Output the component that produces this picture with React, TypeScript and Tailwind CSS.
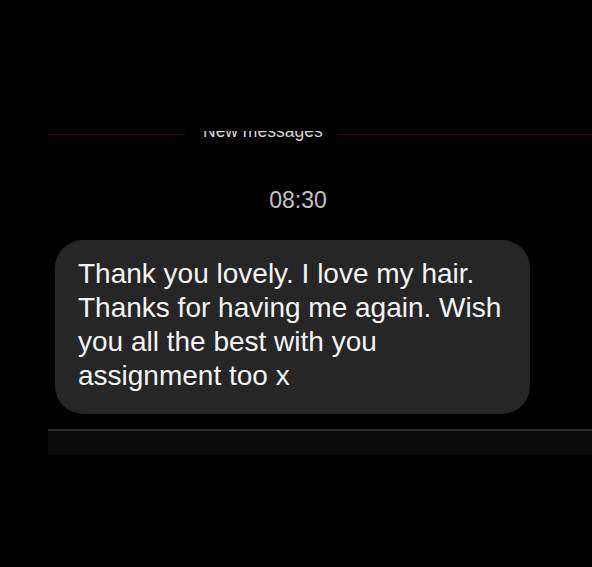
import React from 'react'

const lines = [
  'Thank you lovely. I love my hair.',
  'Thanks for having me again. Wish',
  'you all the best with you',
  'assignment too x',
]

const App = () => {
  return (
    <div className="w-[592px] h-[567px] bg-black overflow-hidden font-['Liberation_Sans',Arial,sans-serif]">
      {/* new messages divider, scrolled so its top is cut off */}
      <div className="pt-[131px]">
        <div className="h-[10px] overflow-hidden flex items-start pl-[48px]">
          <div className="w-[137px] h-px mt-[3px] bg-[#360b16]" />
          <span className="ml-[18px] -mt-[8px] text-[17.5px] leading-[17px] text-[#d6d6d6] whitespace-nowrap">
            New messages
          </span>
          <div className="flex-1 h-px mt-[3px] ml-[15px] bg-[#360b16]" />
        </div>
      </div>

      {/* time */}
      <div className="mt-[46px] text-center text-[23px] leading-[26px] text-[#c4c4c4]">
        <span className="ml-[4px]">08:30</span>
      </div>

      {/* bubble */}
      <div className="mt-[27px] ml-[55px] w-[475px] h-[174px] rounded-[28px] bg-[#262626] pl-[23px] pt-[17px]">
        {lines.map((l) => (
          <div key={l} className="text-[28px] leading-[34px] text-[#f4f4f4] whitespace-nowrap">
            {l}
          </div>
        ))}
      </div>

      {/* composer top edge */}
      <div className="mt-[15px] ml-[48px]">
        <div className="h-[2px] bg-[#2e2e2e]" />
        <div className="h-[24px] bg-[#0a0a0a]" />
      </div>
    </div>
  )
}

export default App
